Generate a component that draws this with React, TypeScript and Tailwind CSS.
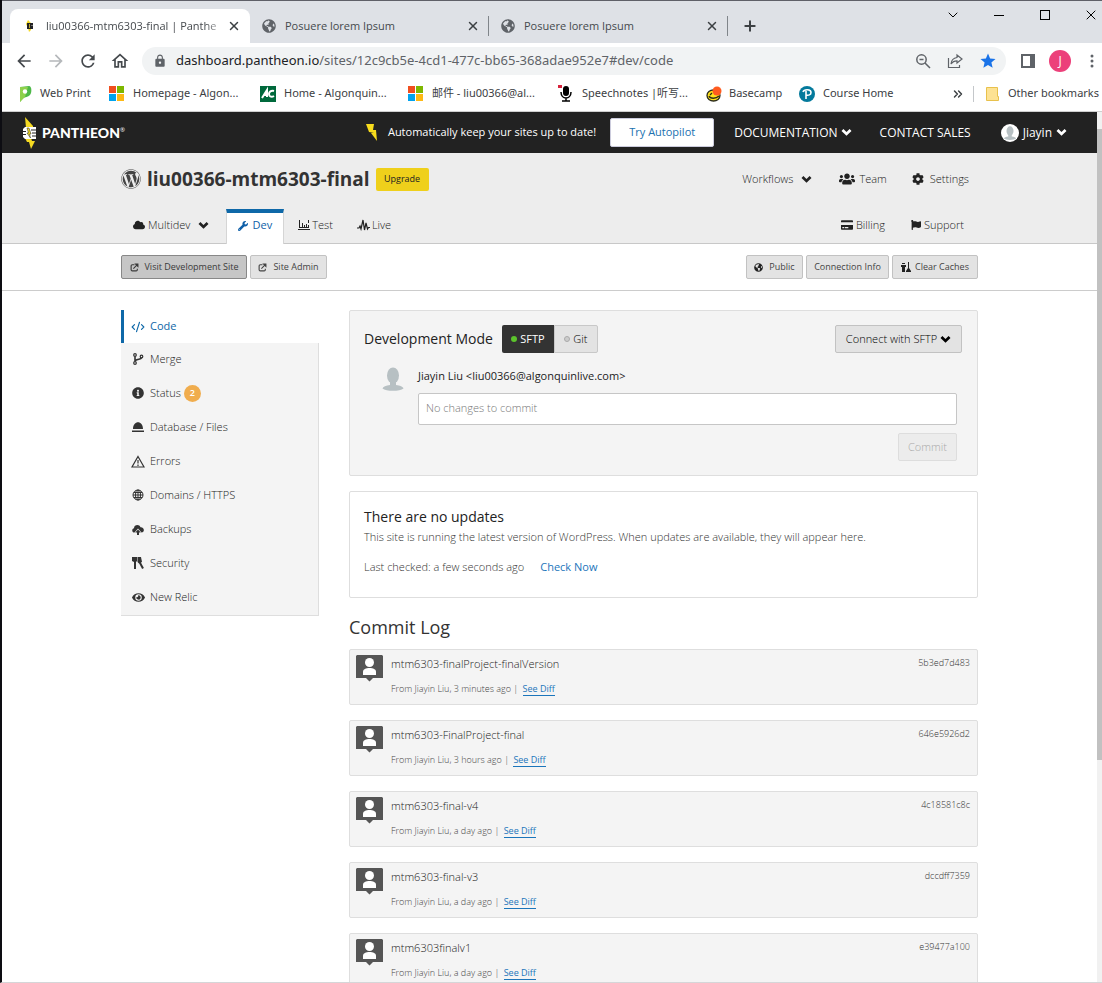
import React from "react";
import {
  FaCloud,
  FaCloudUploadAlt,
  FaCog,
  FaCreditCard,
  FaEye,
  FaFlag,
  FaGlobeAmericas,
  FaInfoCircle,
  FaUsers,
  FaWordpress,
  FaWrench,
} from "react-icons/fa";
import { MdArrowBack, MdArrowForward, MdLock, MdOutlineHome, MdRefresh, MdStar } from "react-icons/md";
import { ChevronDown, ChevronsRight, CodeXml, Plus, X } from "lucide-react";

const uiFont = "font-['Open_Sans','Noto_Sans_CJK_SC',sans-serif]";

const Globe = ({ className }: { className: string }) => <FaGlobeAmericas aria-hidden className={className} />;

function Caret() {
  return (
    <svg viewBox="0 0 11 9" className="h-[9px] w-[11px] shrink-0" fill="currentColor" aria-hidden>
      <path d="M.5 3l1.900-1.900L5.500 4.100 8.600 1.100 10.500 3l-5 4.800z" />
    </svg>
  );
}

function Microsoft() {
  return (
    <svg viewBox="0 0 15 15" className="size-[15px] shrink-0" aria-hidden>
      <path fill="#f04e1f" d="M0 0h7v7H0z" />
      <path fill="#7db700" d="M8 0h7v7H8z" />
      <path fill="#00a3ee" d="M0 8h7v7H0z" />
      <path fill="#fdb813" d="M8 8h7v7H8z" />
    </svg>
  );
}

function PantheonMark({ className }: { className: string }) {
  return (
    <svg viewBox="0 0 16 32" className={className} aria-hidden>
      <path fill="#f5da22" d="M3 0l8 9v2H4zM3 21h6l1 3h3l-4 8-2-7H5z" />
      <path fill="#fff" d="M3 10h11v12H3l-2-2v-8z" />
      <path fill="#222" d="M9 12.500h5v1H9zM10 15.500h4v1h-4zM10 18.500h4v1h-4zM1 14h3v1H1zM1 17h3v1H1z" />
      <path fill="#f5da22" stroke="#222" strokeWidth=".5" d="M5 11l2 0 2 6H7.500l1 4L5 16h1.500z" />
    </svg>
  );
}

function Favicon() {
  return (
    <svg viewBox="0 0 8 12" className="h-3 w-2 shrink-0" aria-hidden>
      <path fill="#f5da22" d="M2 0l3 3v7l-2 2-1-4-2-4z" />
      <path fill="#222" d="M1 3h6v6H1z" />
      <path fill="#b9a52a" d="M3 4h1v4H3z" />
      <path fill="#777" d="M5 5h2v1H5z" />
    </svg>
  );
}

function Bolt() {
  return (
    <svg viewBox="0 0 12 19" className="h-[19px] w-3" aria-hidden>
      <path fill="#f8dc1c" d="M0 1h8l-1 6h3l1 11-6-8h3L3 9z" />
    </svg>
  );
}

function ExternalIcon() {
  return (
    <svg viewBox="0 0 16 16" className="size-[9px]" fill="none" stroke="currentColor" strokeWidth="2" aria-hidden>
      <path d="M8 3H4a2 2 0 0 0-2 2v7a2 2 0 0 0 2 2h7a2 2 0 0 0 2-2v-2M6 10l7-7" />
      <path fill="currentColor" d="M10 2h4v4z" />
    </svg>
  );
}

function Avatar({ className }: { className: string }) {
  return (
    <svg viewBox="0 0 22 24" className={className} fill="#b7c0c3" aria-hidden>
      <ellipse cx="11" cy="8.500" rx="6" ry="8" />
      <path d="M8 14h6v4c4 .5 7 1.500 7.500 3.500C18 24.600 4 24.600.5 21.500 1 19.500 4 18.500 8 18z" />
    </svg>
  );
}

const tabs = ["Posuere lorem Ipsum", "Posuere lorem Ipsum"];

function TabStrip() {
  return (
    <div className="flex h-[43px] border-t border-[#5f6068] bg-[#dee1e6] text-[11px] text-[#45494d]">
      <div className="mt-2 ml-2 flex w-60 items-center rounded-t-lg bg-white pr-[9px] pl-4">
        <Favicon />
        <span className="ml-3 flex-1 whitespace-nowrap [mask-image:linear-gradient(to_right,black_88%,transparent)]">
          liu00366-mtm6303-final | Panthe
        </span>
        <button aria-label="Close tab">
          <X className="size-3.5 text-[#3c4043]" strokeWidth={2.5} />
        </button>
      </div>
      {tabs.map((title, i) => (
        <div key={i} className="mt-2 flex w-[239px] items-center pl-3">
          <Globe className="size-3.5 text-[#5f6368]" />
          <span className="ml-[9px] flex-1 whitespace-nowrap">{title}</span>
          <button aria-label="Close tab" className="mr-2">
            <X className="size-3.5 text-[#3c4043]" strokeWidth={2.5} />
          </button>
          <span className="h-5 w-px bg-[#80858a]" />
        </div>
      ))}
      <button aria-label="New tab" className="mt-2 ml-3.5">
        <Plus className="size-4 text-[#3c4043]" strokeWidth={3} />
      </button>
      <div className="ml-auto flex h-7 items-center text-black">
        <button aria-label="Search tabs" className="grid w-[46px] place-items-center">
          <ChevronDown className="size-4" strokeWidth={1.5} />
        </button>
        <button aria-label="Minimize" className="grid h-4 w-[46px] place-items-center">
          <span className="h-px w-2.5 bg-black" />
        </button>
        <button aria-label="Maximize" className="grid w-[46px] place-items-center">
          <span className="size-2.5 border border-black" />
        </button>
        <button aria-label="Close window" className="flex w-[34px] justify-end pr-[3px]">
          <X className="size-4" strokeWidth={1.5} />
        </button>
      </div>
    </div>
  );
}

function Toolbar() {
  return (
    <div className="flex h-9 items-center pr-2 pl-3 text-[#5f6368]">
      <div className="flex w-32 items-center gap-3">
        <button aria-label="Back">
          <MdArrowBack className="size-5 text-[#45494d]" />
        </button>
        <button aria-label="Forward">
          <MdArrowForward className="size-5 text-[#b5b8bb]" />
        </button>
        <button aria-label="Reload">
          <MdRefresh className="size-5 text-[#45494d]" />
        </button>
        <button aria-label="Home">
          <MdOutlineHome className="size-5 text-[#45494d]" />
        </button>
      </div>
      <div className="flex h-7 flex-1 items-center rounded-full bg-[#f1f3f4] pr-[9px] pl-[11px]">
        <MdLock className="size-3.5" />
        <div role="textbox" aria-label="Address" className="ml-[9px] flex-1 font-['Noto_Sans',sans-serif] text-[13px] whitespace-nowrap">
          <span className="text-[#202124]">dashboard.pantheon.io</span>
          /sites/12c9cb5e-4cd1-477c-bb65-368adae952e7#dev/code
        </div>
        <div className="flex items-center gap-4">
          <svg viewBox="0 0 16 16" className="size-4" fill="none" stroke="currentColor" strokeWidth="1.500" aria-hidden>
            <circle cx="6.500" cy="6.500" r="4.700" />
            <path d="M10 10l5 5M4.500 6.500h4" />
          </svg>
          <svg viewBox="0 0 16 16" className="size-4" fill="none" stroke="currentColor" strokeWidth="1.200" aria-hidden>
            <path d="M1.500 5v9.500h11V12M10 2l5 4-5 4V7.800C7.500 7.800 5.500 8.700 4 11c.3-3.500 2.500-6 6-6.500z" />
          </svg>
          <MdStar className="size-[18px] text-[#1a73e8]" />
        </div>
      </div>
      <svg viewBox="0 0 14 14" className="ml-[15px] size-3.5" aria-hidden>
        <path fill="currentColor" fillRule="evenodd" d="M0 0h14v14H0zM2 2v10h7V2z" />
      </svg>
      <span className="ml-3.5 grid size-[22px] place-items-center rounded-full bg-[#ec407a] text-xs text-white">J</span>
      <svg viewBox="0 0 4 14" className="ml-[19px] h-3.5 w-1" fill="currentColor" aria-hidden>
        <circle cx="2" cy="2" r="1.500" />
        <circle cx="2" cy="7" r="1.500" />
        <circle cx="2" cy="12" r="1.500" />
      </svg>
    </div>
  );
}

function Bookmarks() {
  const link = "flex items-center whitespace-nowrap";
  return (
    <nav className="flex h-[33px] items-center border-b border-[#cfcfcf] pb-[3px] pl-4 font-['Noto_Sans','Noto_Sans_CJK_SC',sans-serif] text-[11px] text-[#3c4043]">
      <a href="#" className={`${link} w-[91px]`}>
        <svg viewBox="0 0 14 16" className="mr-2 h-4 w-3.5" aria-hidden>
          <path fill="#4db848" d="M2 1l9-1c3 0 3 7 1 9s-5 2-7 3l-3 4z" />
          <path fill="#8ed14b" d="M2 1l8 0-3 10-5 5z" />
          <circle cx="7" cy="5.500" r="2.200" fill="#fff" />
        </svg>
        Web Print
      </a>
      <a href="#" className={`${link} w-[151px]`}>
        <Microsoft />
        <span className="ml-[9px]">Homepage - Algon...</span>
      </a>
      <a href="#" className={`${link} w-[148px]`}>
        <svg viewBox="0 0 16 16" className="size-4" fill="none" aria-hidden>
          <path fill="#00693c" d="M0 0h16v16H0z" />
          <path stroke="#fff" strokeWidth="2" d="M2 12l5-8v7M4 9h4M14 5c-3-1-5 1-5 3s2 4 5 2" />
        </svg>
        <span className="ml-2">Home - Algonquin...</span>
      </a>
      <a href="#" className={`${link} w-[150px]`}>
        <Microsoft />
        <span className="ml-[9px]">邮件 - liu00366@al...</span>
      </a>
      <a href="#" className={`${link} w-[148px]`}>
        <svg viewBox="0 0 15 17" className="h-[17px] w-[15px]" aria-hidden>
          <path fill="#d8233c" d="M0 0h4v3H0z" />
          <rect x="5" y="1" width="6" height="10" rx="3" fill="#000" />
          <path d="M3 7c0 8 10 8 10 0M8 13v3M4 16h8" fill="none" stroke="#000" strokeWidth="1.500" />
        </svg>
        <span className="ml-[9px]">Speechnotes |听写...</span>
      </a>
      <a href="#" className={`${link} w-[93px]`}>
        <svg viewBox="0 0 16 16" className="size-4" aria-hidden>
          <ellipse cx="7.500" cy="9.500" rx="6.500" ry="5.500" fill="#ffe11a" stroke="#2b2b1a" strokeWidth="1.300" />
          <path d="M3 10c1 3 7 3 10 0M4 9l2-2" fill="none" stroke="#2b2b1a" strokeWidth="1.300" />
          <circle cx="11" cy="5" r="4.500" fill="#ff5b1f" />
        </svg>
        <span className="ml-[7px]">Basecamp</span>
      </a>
      <a href="#" className={link}>
        <svg viewBox="0 0 16 16" className="size-4" fill="none" stroke="#fff" strokeWidth="1.600" aria-hidden>
          <circle cx="8" cy="8" r="8" fill="#047a9c" stroke="none" />
          <path d="M7 13V5M4 6c1-3 8-3 8 .5C12 9 9.500 9.500 7 9" />
        </svg>
        <span className="ml-2">Course Home</span>
      </a>
      <button aria-label="More bookmarks" className="ml-auto">
        <ChevronsRight className="size-3.5" strokeWidth={2.5} />
      </button>
      <span className="ml-2 h-4 w-px bg-[#c4c7ca]" />
      <a href="#" className={`${link} ml-3 pr-[3px]`}>
        <svg viewBox="0 0 13 14" className="mr-[9px] h-3.5 w-[13px]" aria-hidden>
          <path fill="#fde293" stroke="#e8c14c" d="M.5.5h11v9h1v4H.5z" />
        </svg>
        Other bookmarks
      </a>
    </nav>
  );
}

function TopBar() {
  return (
    <header className="flex h-[41px] items-center bg-[#222] pr-[30px] text-[11px] text-white">
      <a href="#" className="ml-5 flex items-center">
        <PantheonMark className="h-8 w-4" />
        <span className="ml-1 font-['Lato',sans-serif] text-[14px] font-black">PANTHEON</span>
        <sup className="text-[6px] font-normal">®</sup>
      </a>
      <div className="ml-auto flex items-center">
        <Bolt />
        <span className="ml-2.5">Automatically keep your sites up to date!</span>
        <button className="ml-3.5 h-[29px] w-[104px] rounded-xs border border-[#ccd] bg-white text-[#2071b0]">
          Try Autopilot
        </button>
        <a href="#" className="ml-5 flex items-center gap-[3px] text-xs">
          DOCUMENTATION <Caret />
        </a>
        <a href="#" className="ml-7 text-xs">
          CONTACT SALES
        </a>
        <a href="#" className="ml-[30px] flex items-center text-xs">
          <span className="mr-1 grid size-[18px] place-items-center rounded-full bg-white">
            <Avatar className="size-3.5" />
          </span>
          <span className="mr-1">Jiayin</span> <Caret />
        </a>
      </div>
    </header>
  );
}

function SiteHeader() {
  const item = "flex items-center";
  return (
    <div className="border-b border-[#c8c8c8] bg-[#ededed] font-light text-[#222]">
      <div className="mx-auto w-[857px] max-w-full text-[11px]">
        <div className="flex h-14 items-center pr-[9px] pb-1">
          <FaWordpress className="size-5 text-[#444]" />
          <h1 className="ml-1.5 text-[19px] font-bold text-[#333]">liu00366-mtm6303-final</h1>
          <button className="ml-1.5 h-[23px] w-[53px] rounded-xs bg-[#efd01b] text-[9px] font-normal">Upgrade</button>
          <nav className="ml-auto flex items-center">
            <a href="#" className={`${item} gap-2`}>
              Workflows <Caret />
            </a>
            <a href="#" className={`${item} ml-[27px] gap-1`}>
              <FaUsers className="size-4" /> Team
            </a>
            <a href="#" className={`${item} ml-[25px] gap-1.5`}>
              <FaCog className="size-3" /> Settings
            </a>
          </nav>
        </div>
        <div className="flex h-[34px]">
          <a href="#" className={`${item} ml-3 gap-[3px] pb-0.5`}>
            <FaCloud className="size-3" /> Multidev <span className="w-0.5" />
            <Caret />
          </a>
          <a
            href="#"
            className={`${item} -mb-px ml-[17px] w-[58px] justify-center gap-1 border-x border-t-4 border-x-[#d5d5d5] border-t-[#0e68a8] bg-white pb-1.5 font-normal text-[#0e5fa8]`}
          >
            <FaWrench className="size-2.5" /> Dev
          </a>
          <a href="#" className={`${item} ml-3.5 gap-0.5 pb-0.5`}>
            <svg viewBox="0 0 12 12" className="size-3" fill="none" stroke="currentColor" aria-hidden>
              <path d="M1.500 1v8M0 10.500h12M4.500 4v5M6.500 6v3M8.500 5v4M10.500 1v3M10.500 6v3M2 8.500h9" />
            </svg>
            Test
          </a>
          <a href="#" className={`${item} ml-6 gap-0.5 pb-0.5`}>
            <svg viewBox="0 0 13 12" className="h-3 w-[13px]" fill="none" stroke="currentColor" strokeWidth="1.200" aria-hidden>
              <path d="M0 9h2l1-2 1 3 2-9 1.500 10L9 4l1.500 6 1-1.500H13" />
            </svg>
            Live
          </a>
          <nav className="ml-auto flex items-center pr-3.5 pb-0.5">
            <a href="#" className={`${item} gap-[3px]`}>
              <FaCreditCard className="size-3" /> Billing
            </a>
            <a href="#" className={`${item} ml-[26px] gap-[3px]`}>
              <FaFlag className="size-2.5" /> Support
            </a>
          </nav>
        </div>
      </div>
    </div>
  );
}

const smallButton =
  "flex h-6 items-center justify-center rounded-xs border border-[#c2c2c2] bg-[#e3e3e3] text-[9px] text-[#444]";

function ActionBar() {
  return (
    <div className="border-b border-[#ccc]">
      <div className="mx-auto flex h-[46px] w-[857px] max-w-full items-center gap-[3px]">
        <button className="flex h-6 w-[126px] items-center justify-center gap-1.5 rounded-xs border border-[#888] bg-[#c6c6c6] text-[9px] text-[#3a3a3a]">
          <ExternalIcon /> Visit Development Site
        </button>
        <button className={`${smallButton} w-[77px] gap-1.5`}>
          <ExternalIcon /> Site Admin
        </button>
        <button className={`${smallButton} ml-auto w-[57px] gap-1.5`}>
          <Globe className="size-[9px] text-[#222]" /> Public
        </button>
        <button className={`${smallButton} w-[83px]`}>Connection Info</button>
        <button className={`${smallButton} w-[86px] gap-1`}>
          <svg viewBox="0 0 10 10" className="size-2.5 text-[#222]" fill="currentColor" aria-hidden>
            <path d="M0 3h5v2H4v5H1V5H0zM1 1h3v1H1zM7 0h1v6l2 3v1H5V9l2-3z" />
          </svg>
          Clear Caches
        </button>
      </div>
    </div>
  );
}

const menu = [
  {
    label: "Merge",
    icon: (
      <svg viewBox="0 0 12 12" className="size-3" fill="none" stroke="currentColor" strokeWidth="1.200" aria-hidden>
        <circle cx="3" cy="2" r="1.300" />
        <circle cx="3" cy="10" r="1.300" />
        <circle cx="9.500" cy="3.500" r="1.300" />
        <path strokeWidth="1.600" d="M3 3.500v5M3.500 7.500c2-2 5.500-.5 6-2.700" />
      </svg>
    ),
  },
  { label: "Status", icon: <FaInfoCircle className="size-3" />, count: 2 },
  {
    label: "Database / Files",
    icon: (
      <svg viewBox="0 0 12 12" className="size-3" fill="currentColor" aria-hidden>
        <path d="M1 8c0-9 10-9 10 0zM0 9.500h12V11H0z" />
      </svg>
    ),
  },
  {
    label: "Errors",
    icon: (
      <svg viewBox="0 0 14 13" className="h-[13px] w-3.5" fill="none" stroke="currentColor" strokeWidth="1.200" aria-hidden>
        <path d="M7 1.500L13 12H1zM7 5v3.500M7 9.500V11" />
      </svg>
    ),
  },
  {
    label: "Domains / HTTPS",
    icon: (
      <svg viewBox="0 0 12 12" className="size-3" fill="none" stroke="currentColor" aria-hidden>
        <circle cx="6" cy="6" r="5" />
        <path d="M6 1v10M1 6h10M2 3.500h8M2 8.500h8" />
        <ellipse cx="6" cy="6" rx="2.500" ry="5" />
      </svg>
    ),
  },
  {
    label: "Backups",
    icon: (
      <svg viewBox="0 0 12 12" className="size-3" fill="currentColor" aria-hidden>
        <path d="M2.500 9.500C-.5 9.500-.3 5.500 2 5.300 2 1.500 7.500 1 8.500 4.300 12.500 4 13 9.500 9.500 9.500L6 5.500z" />
        <path d="M6 6.500l2.800 3H7V12H5V9.500H3.200z" />
      </svg>
    ),
  },
  {
    label: "Security",
    icon: (
      <svg viewBox="0 0 12 12" className="size-3" aria-hidden>
        <path fill="currentColor" d="M0 0h5v4L4 5v7H2V5L0 4z" />
        <path stroke="currentColor" strokeWidth="2" d="M7 4l4 7.500" />
        <path fill="currentColor" d="M5.500 0H9l1 5-3 1.500L5.500 5z" />
      </svg>
    ),
  },
  { label: "New Relic", icon: <FaEye className="size-[13px]" /> },
];

function Sidebar() {
  return (
    <nav className="w-[198px] shrink-0 self-start text-[11px] font-light text-[#222]">
      <a href="#" className="flex h-[33px] items-center border-l-[3px] border-[#0e68a8] pl-1.5 font-normal text-[#0e68a8]">
        <span className="mr-1 grid w-4 place-items-center">
          <CodeXml className="size-3.5" />
        </span>
        Code
      </a>
      <div className="border-r border-b border-[#dedede] bg-[#f4f4f4]">
        {menu.map((m) => (
          <a key={m.label} href="#" className="flex h-[34px] items-center pb-0.5 pl-[9px]">
            <span className="mr-1 grid w-4 place-items-center text-[#333]">{m.icon}</span>
            {m.label}
            {m.count && (
              <span className="ml-[3px] grid size-[17px] place-items-center rounded-full bg-[#f0ad4e] text-[9px] font-semibold text-white">
                {m.count}
              </span>
            )}
          </a>
        ))}
      </div>
    </nav>
  );
}

function DevelopmentMode() {
  return (
    <section className="rounded-xs border border-[#dedede] bg-[#f4f4f4] py-3.5 pr-[15px] pl-3.5 text-[11px]">
      <div className="flex h-7 items-center">
        <h2 className="text-sm text-[#222]">Development Mode</h2>
        <button className="ml-[9px] flex h-7 w-[52px] items-center justify-center gap-[3px] rounded-l-xs bg-[#333] text-white">
          <span className="size-1.5 rounded-full bg-[#5cc42c]" /> SFTP
        </button>
        <button className="flex h-7 w-11 items-center justify-center gap-[3px] rounded-r-xs border border-[#c8c8c8] bg-[#e3e3e3] font-light">
          <span className="size-1.5 rounded-full border border-[#aaa] bg-[#ccc]" /> Git
        </button>
        <button className="ml-auto flex h-7 w-[127px] items-center justify-center gap-[3px] rounded-xs border border-[#c2c2c2] bg-[#e3e3e3] font-light">
          Connect with SFTP <Caret />
        </button>
      </div>
      <div className="mt-3.5 flex pr-[5px] pl-[18px]">
        <Avatar className="h-6 w-[22px] shrink-0" />
        <div className="ml-3.5 flex flex-1 flex-col items-end">
          <label htmlFor="commit-message" className="h-[26px] w-full leading-[18px] text-[#222]">
            Jiayin Liu &lt;liu00366@algonquinlive.com&gt;
          </label>
          <input
            id="commit-message"
            placeholder="No changes to commit"
            className="h-8 w-full rounded-xs border border-[#c6c6c6] bg-white px-[7px] pb-1 font-light placeholder:text-[#777]"
          />
          <button
            disabled
            className="mt-2 h-7 w-[59px] rounded-xs border border-[#ddd] bg-[#ececec] font-light text-[#aaa]"
          >
            Commit
          </button>
        </div>
      </div>
    </section>
  );
}

const commits = [
  { title: "mtm6303-finalProject-finalVersion", age: "3 minutes ago", hash: "5b3ed7d483" },
  { title: "mtm6303-FinalProject-final", age: "3 hours ago", hash: "646e5926d2" },
  { title: "mtm6303-final-v4", age: "a day ago", hash: "4c18581c8c" },
  { title: "mtm6303-final-v3", age: "a day ago", hash: "dccdff7359" },
  { title: "mtm6303finalv1", age: "a day ago", hash: "e39477a100" },
];

function CommitLog() {
  return (
    <section>
      <h2 className="mt-4 text-lg leading-[26px] text-[#333]">Commit Log</h2>
      <ul className="mt-[9px] flex flex-col gap-[15px]">
        {commits.map((c) => (
          <li key={c.hash} className="flex h-14 rounded-xs border border-[#dedede] bg-[#f4f4f4] pt-[5px] pr-[7px] pl-1.5 text-[9px] font-light">
            <svg viewBox="0 0 27 27" className="size-[27px] shrink-0" aria-hidden>
              <path fill="#555" d="M1 0h25l1 1v22H17l-3.500 3.500L10 23H0V1z" />
              <circle cx="13.500" cy="7.500" r="4.500" fill="#fff" />
              <path fill="#fff" d="M7 20v-3c0-3 3-4 6.500-4s6.500 1 6.500 4v3z" />
            </svg>
            <div className="ml-2 flex-1">
              <p className="text-[11px] leading-[18px] text-[#222]">{c.title}</p>
              <p className="mt-2 leading-4 text-[#444]">
                From Jiayin Liu, {c.age} |{" "}
                <a href="#" className="ml-0.5 border-b border-[#1b75bb] font-normal text-[#1b75bb]">
                  See Diff
                </a>
              </p>
            </div>
            <span className="leading-4 text-[#333]">{c.hash}</span>
          </li>
        ))}
      </ul>
    </section>
  );
}

export default function App() {
  return (
    <div className={`flex h-screen flex-col overflow-hidden border-b border-l-2 border-b-[#d5d6d8] border-l-[#0d0d12] bg-white ${uiFont}`}>
      <TabStrip />
      <Toolbar />
      <Bookmarks />
      <div className="flex min-h-0 flex-1">
        <div className="min-w-0 flex-1 overflow-hidden">
          <TopBar />
          <SiteHeader />
          <ActionBar />
          <main className="mx-auto flex w-[857px] max-w-full gap-[30px] pt-[19px]">
            <Sidebar />
            <div className="min-w-0 flex-1">
              <DevelopmentMode />
              <section className="mt-[15px] h-[107px] rounded-xs border border-[#dedede] px-3.5 pt-[15px] text-[11px] font-light text-[#333]">
                <h2 className="text-sm leading-5 font-normal text-[#222]">There are no updates</h2>
                <p className="leading-5">
                  This site is running the latest version of WordPress. When updates are available, they will appear here.
                </p>
                <p className="mt-2.5 leading-5">
                  Last checked: a few seconds ago
                  <a href="#" className="ml-4 font-normal text-[#1b75bb]">
                    Check Now
                  </a>
                </p>
              </section>
              <CommitLog />
            </div>
          </main>
        </div>
        <div className="w-[5px] bg-[#f1f1f1] pt-[17px]">
          <div className="h-[74%] bg-[#c1c1c1]" />
        </div>
      </div>
    </div>
  );
}
